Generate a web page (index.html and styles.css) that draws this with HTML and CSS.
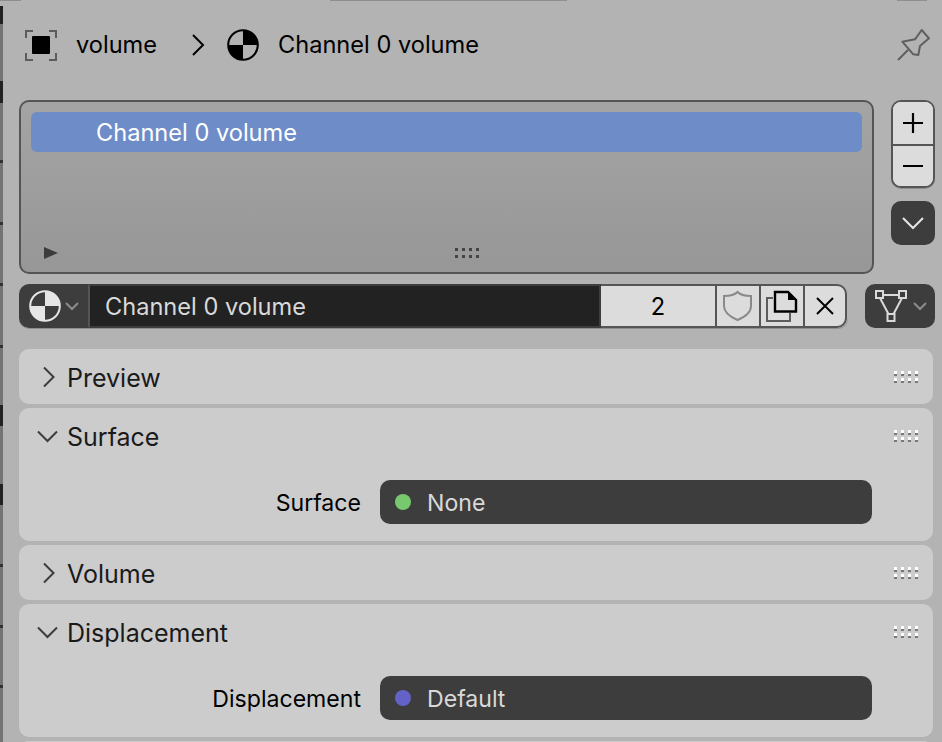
FILE: index.html
```html
<!DOCTYPE html>
<html lang="en">
<head>
<meta charset="utf-8">
<title>Material properties</title>
<link rel="stylesheet" href="styles.css">
</head>
<body>
<div class="editor">
  <header class="breadcrumb">
    <svg class="crumb-object" width="34" height="34" viewBox="0 0 34 34"><path d="M2 10V3h7M25 3h7v7M32 25v7h-7M9 32H2v-7" fill="none" stroke="#5c5c5c" stroke-width="2"/><rect x="8" y="8" width="18" height="18" rx="1" fill="#000"/></svg>
    <span class="crumb-name">volume</span>
    <svg class="crumb-sep" width="14" height="24" viewBox="0 0 14 24"><path d="M2 2l10 10L2 22" fill="none" stroke="#000" stroke-width="2"/></svg>
    <svg class="crumb-mat" width="32" height="32" viewBox="0 0 32 32"><circle cx="16" cy="16" r="14.8" fill="#b3b3b3" stroke="#000" stroke-width="2"/><path d="M16 1a15 15 0 0 1 15 15H16zM16 16v15A15 15 0 0 1 1 16z" fill="#000"/></svg>
    <span class="crumb-title">Channel 0 volume</span>
    <svg class="pin" width="36" height="34" viewBox="0 0 36 34"><path d="M2 32l10-10M6.300 13.700L19 11.300 25.700 2 33 10.300 24 18 22.300 27 17.300 26.300z" fill="none" stroke="#5f5f5f" stroke-width="2" stroke-linejoin="round"/></svg>
  </header>

  <section class="list-row">
    <div class="list-box">
      <div class="list-item">Channel 0 volume</div>
      <div class="list-foot">
        <svg width="14" height="14" viewBox="0 0 14 14"><path d="M0 1l14 6-14 6z" fill="#3c3c3c"/></svg>
        <div class="grip grip-dark"><i></i><i></i><i></i><i></i><i></i><i></i><i></i><i></i></div>
      </div>
    </div>
    <div class="list-side">
      <div class="pm">
        <button class="pm-btn"><svg width="24" height="24" viewBox="0 0 24 24"><path d="M12 2v20M2 12h20" stroke="#000" stroke-width="2.2"/></svg></button>
        <button class="pm-btn pm-minus"><svg width="24" height="24" viewBox="0 0 24 24"><path d="M2 12h20" stroke="#000" stroke-width="2.2"/></svg></button>
      </div>
      <button class="menu-btn"><svg width="24" height="14" viewBox="0 0 24 14"><path d="M2 2l10 10L22 2" fill="none" stroke="#e6e6e6" stroke-width="2"/></svg></button>
    </div>
  </section>

  <section class="id-row">
    <div class="id-group">
      <button class="id-browse">
        <svg width="32" height="32" viewBox="0 0 32 32"><circle cx="16" cy="16" r="14.8" fill="#3d3d3d" stroke="#e6e6e6" stroke-width="2"/><path d="M16 1a15 15 0 0 1 15 15H16zM16 16v15A15 15 0 0 1 1 16z" fill="#e6e6e6"/></svg>
        <svg width="14" height="9" viewBox="0 0 14 9"><path d="M1 1l6 6 6-6" fill="none" stroke="#8c8c8c" stroke-width="2"/></svg>
      </button>
      <div class="id-name">Channel 0 volume</div>
      <div class="id-count">2</div>
      <button class="id-btn"><svg width="30" height="32" viewBox="0 0 30 32"><path d="M14.500 2c3 3 8 4 13.500 4v10c0 7-6 11-13.500 14C7.500 27 1 23 1 16V6c5.500 0 10.500-1 13.500-4z" fill="none" stroke="#8a8a8a" stroke-width="2"/></svg></button>
      <button class="id-btn"><svg width="32" height="32" viewBox="0 0 32 32"><path d="M7 8H1v23h23v-8" fill="none" stroke="#5c5c5c" stroke-width="2"/><path d="M9 21.500V2h13l8 8v11.500z" fill="none" stroke="#000" stroke-width="2.400"/><path d="M22 1l9 9h-9z" fill="#000"/></svg></button>
      <button class="id-btn id-close"><svg width="20" height="20" viewBox="0 0 20 20"><path d="M2 2l16 16M18 2L2 18" stroke="#000" stroke-width="2"/></svg></button>
    </div>
    <button class="nodes-btn">
      <svg width="34" height="34" viewBox="0 0 34 34"><path d="M7 6h20M6 9l9 17M28 9l-9 17" fill="none" stroke="#d9d9d9" stroke-width="2"/><rect x="2" y="2" width="7" height="7" fill="#3d3d3d" stroke="#d9d9d9" stroke-width="2"/><rect x="25" y="2" width="7" height="7" fill="#3d3d3d" stroke="#d9d9d9" stroke-width="2"/><rect x="13.500" y="25" width="7" height="7" fill="#3d3d3d" stroke="#d9d9d9" stroke-width="2"/></svg>
      <svg width="14" height="9" viewBox="0 0 14 9"><path d="M1 1l6 6 6-6" fill="none" stroke="#8c8c8c" stroke-width="2"/></svg>
    </button>
  </section>

  <main class="panels">
    <section class="panel">
      <div class="panel-head">
        <svg class="arrow" width="24" height="24" viewBox="0 0 24 24"><path d="M8 2.500l9.500 9.500L8 21.500" fill="none" stroke="#3c3c3c" stroke-width="2"/></svg>
        <h2>Preview</h2>
        <div class="grip"><i></i><i></i><i></i><i></i><i></i><i></i><i></i><i></i></div>
      </div>
    </section>
    <section class="panel">
      <div class="panel-head">
        <svg class="arrow" width="24" height="24" viewBox="0 0 24 24"><path d="M2 7.500l9.500 9.500L21 7.500" fill="none" stroke="#3c3c3c" stroke-width="2"/></svg>
        <h2>Surface</h2>
        <div class="grip"><i></i><i></i><i></i><i></i><i></i><i></i><i></i><i></i></div>
      </div>
      <div class="prop">
        <span class="prop-label">Surface</span>
        <div class="prop-field"><span class="dot dot-green"></span><span class="prop-value">None</span></div>
      </div>
    </section>
    <section class="panel">
      <div class="panel-head">
        <svg class="arrow" width="24" height="24" viewBox="0 0 24 24"><path d="M8 2.500l9.500 9.500L8 21.500" fill="none" stroke="#3c3c3c" stroke-width="2"/></svg>
        <h2>Volume</h2>
        <div class="grip"><i></i><i></i><i></i><i></i><i></i><i></i><i></i><i></i></div>
      </div>
    </section>
    <section class="panel">
      <div class="panel-head">
        <svg class="arrow" width="24" height="24" viewBox="0 0 24 24"><path d="M2 7.500l9.500 9.500L21 7.500" fill="none" stroke="#3c3c3c" stroke-width="2"/></svg>
        <h2>Displacement</h2>
        <div class="grip"><i></i><i></i><i></i><i></i><i></i><i></i><i></i><i></i></div>
      </div>
      <div class="prop">
        <span class="prop-label">Displacement</span>
        <div class="prop-field"><span class="dot dot-blue"></span><span class="prop-value">Default</span></div>
      </div>
    </section>
    <section class="panel panel-next"></section>
  </main>
</div>
</body>
</html>
```
FILE: styles.css
```css
* { box-sizing: border-box; }
html, body { margin: 0; height: 100%; }
body {
  background: #b3b3b3;
  font-family: Inter, "Liberation Sans", sans-serif;
  font-size: 23.6px;
  color: #000;
  overflow: hidden;
}
button { font: inherit; padding: 0; border: 0; display: flex; align-items: center; justify-content: center; }
svg { display: block; flex: none; }

.editor {
  width: 942px;
  height: 742px;
  padding: 0 7px 0 19px;
  display: flex;
  flex-direction: column;
  overflow: hidden;
  background-color: #b3b3b3;
  background-repeat: no-repeat;
  background-image:
    linear-gradient(#8e8e8e, #8e8e8e),
    linear-gradient(#8e8e8e, #8e8e8e),
    linear-gradient(#8e8e8e, #8e8e8e),
    linear-gradient(to bottom,
      #b3b3b3 0 6px, #222 6px 24px, #747474 24px 81px, #222 81px 103px, #747474 103px 160px,
      #333 160px 163px, #747474 163px 222px, #333 222px 225px, #747474 225px 283px,
      #333 283px 286px, #747474 286px 345px, #333 345px 348px, #747474 348px 405px,
      #222 405px 426px, #747474 426px 484px, #222 484px 505px, #747474 505px 564px,
      #333 564px 567px, #747474 567px 625px, #333 625px 628px, #747474 628px 685px,
      #333 685px 688px, #747474 688px 742px);
  background-size: 21px 1px, 237px 1px, 30px 1px, 3px 742px;
  background-position: 0 0, 330px 0, 897px 0, 0 0;
}
.editor > * { flex: none; }

.breadcrumb { display: flex; align-items: center; height: 100px; padding: 0 3px 11px 5px; }
.crumb-name { margin-left: 18px; width: 115px; }
.crumb-sep { margin-right: 22px; }
.crumb-title { margin-left: 19px; }
.pin { margin-left: auto; }

.list-row { display: flex; gap: 17px; height: 174px; }
.list-box {
  width: 855px;
  height: 174px;
  border: 2px solid #555;
  border-radius: 10px;
  background: linear-gradient(#a4a4a4, #979797);
  padding: 10px 10px 0;
  display: flex;
  flex-direction: column;
}
.list-item {
  height: 40px;
  background: #6d8cc8;
  border-radius: 6px;
  color: #fff;
  line-height: 42px;
  padding-left: 65px;
}
.list-foot { position: relative; flex: 1; }
.list-foot svg { position: absolute; left: 13px; top: 94px; }
.grip {
  display: grid;
  grid-template-columns: repeat(4, 3px);
  gap: 4px;
  margin-left: auto;
  margin-bottom: 1px;
}
.grip i { width: 3px; height: 3px; background: #fff; box-shadow: 0 2px 0 #777; }
.grip-dark { position: absolute; left: 424px; top: 96px; }
.grip-dark i { background: #444; box-shadow: none; }

.list-side { display: flex; flex-direction: column; }
.pm {
  width: 44px;
  height: 88px;
  border: 2px solid #555;
  border-radius: 10px;
  background: #dcdcdc;
  overflow: hidden;
  box-shadow: 0 1px 0 #8f8f8f;
}
.pm-btn { width: 100%; height: 42px; background: #dcdcdc; }
.pm-minus { border-top: 2px solid #555; }
.menu-btn {
  width: 44px;
  height: 44px;
  margin-top: 13px;
  background: #3d3d3d;
  border-radius: 10px;
}

.id-row { display: flex; height: 44px; margin-top: 10px; gap: 17px; }
.id-group { display: flex; width: 829px; height: 44px; border-radius: 10px; box-shadow: 0 1px 0 #8f8f8f; }
.id-browse {
  width: 69px;
  background: #3d3d3d;
  border-radius: 10px 0 0 10px;
  gap: 4px;
}
.id-name {
  width: 513px;
  background: #222;
  border: 2px solid #3d3d3d;
  border-left-color: #555;
  color: #d9d9d9;
  line-height: 42px;
  padding-left: 15px;
}
.id-count {
  width: 114px;
  background: #dcdcdc;
  border-top: 2px solid #555;
  border-bottom: 2px solid #555;
  text-align: center;
  line-height: 42px;
}
.id-btn {
  width: 44px;
  background: #dcdcdc;
  border: 2px solid #555;
  border-right: 0;
}
.id-close { border-right: 2px solid #555; border-radius: 0 10px 10px 0; }
.nodes-btn { width: 70px; background: #3d3d3d; border-radius: 10px; gap: 5px; padding-left: 9px; justify-content: flex-start; }

.panels { display: flex; flex-direction: column; gap: 4px; margin-top: 21px; width: 914px; }
.panel { background: #cccccc; border-radius: 10px; flex: none; }
.panel-next { height: 20px; }
.panel-head { display: flex; align-items: center; height: 55px; padding: 0 15px 0 17px; }
.panel-head .arrow { margin-top: 1px; }
.panel-head h2 { font-size: 25px; font-weight: 400; margin: 2px 0 0 7px; color: #1a1a1a; }
.prop { display: flex; align-items: flex-start; height: 78px; padding-top: 17px; font-size: 23.1px; }
.prop-label { width: 342px; text-align: right; line-height: 46px; }
.prop-field {
  width: 492px;
  height: 44px;
  margin-left: 19px;
  background: #3d3d3d;
  border-radius: 10px;
  color: #d9d9d9;
  display: flex;
  align-items: center;
  padding-left: 15px;
}
.prop-value { padding-top: 2px; }
.dot { width: 16px; height: 16px; border-radius: 50%; margin-right: 16px; }
.dot-green { background: #78c86e; }
.dot-blue { background: #6363c7; }
```
